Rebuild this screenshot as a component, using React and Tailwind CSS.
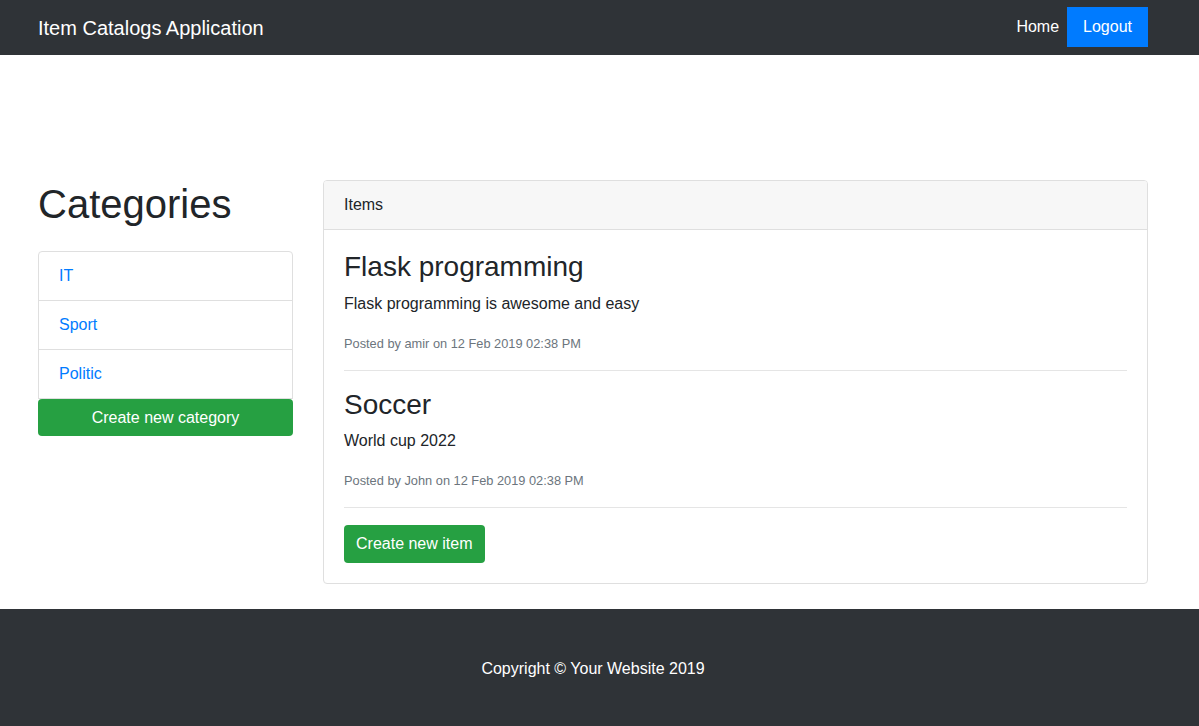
export default function App() {
  const font = { fontFamily: '"Liberation Sans", Arial, sans-serif' };
  const items = [
    { title: "Flask programming", desc: "Flask programming is awesome and easy", by: "amir" },
    { title: "Soccer", desc: "World cup 2022", by: "John" },
  ];
  return (
    <div className="min-h-[726px] flex flex-col bg-white text-[#212529] text-[16px] leading-[24px]" style={font}>
      <nav className="h-[55px] bg-[#2f3337] flex items-center">
        <div className="ml-[38px] w-[1110px] flex items-center justify-between">
          <a className="text-white text-[20px] leading-[30px]">Item Catalogs Application</a>
          <div className="flex items-center -mt-px">
            <a className="text-white px-2 py-2 leading-[24px]">Home</a>
            <a className="text-white bg-[#007bff] px-4 py-2 leading-[24px]">Logout</a>
          </div>
        </div>
      </nav>

      <main className="flex-1 pt-[125px] pb-[25px]">
        <div className="ml-[38px] w-[1110px] flex items-start gap-[30px]">
          <div className="w-[255px] shrink-0">
            <h1 className="text-[40px] leading-[48px] font-medium mb-[23px]">Categories</h1>
            <div className="flex flex-col">
              {["IT", "Sport", "Politic"].map((c, i) => (
                <a
                  key={c}
                  className={`block border border-[#dfdfdf] px-5 py-3 text-[#007bff] ${i === 0 ? "rounded-t-[4px]" : "-mt-px"}`}
                >
                  {c}
                </a>
              ))}
              <button className="h-[37px] w-full rounded-[4px] bg-[#26a042] text-white text-[16px]">
                Create new category
              </button>
            </div>
          </div>

          <div className="flex-1 border border-[#dfdfdf] rounded-[4px] overflow-hidden">
            <div className="bg-[#f7f7f7] border-b border-[#dfdfdf] px-5 py-3">Items</div>
            <div className="px-5 pt-5 pb-5">
              {items.map((it) => (
                <div key={it.title}>
                  <h3 className="text-[28px] leading-[33.6px] font-medium mb-2">{it.title}</h3>
                  <p className="mb-4">{it.desc}</p>
                  <p className="mb-[14px] text-[12.8px] leading-[24px] text-[#6c757d]">
                    Posted by {it.by} on 12 Feb 2019 02:38 PM
                  </p>
                  <hr className="border-0 border-t border-[#e5e5e5] mb-[17px]" />
                </div>
              ))}
              <button className="h-[38px] px-3 rounded-[4px] bg-[#26a042] text-white text-[16px]">
                Create new item
              </button>
            </div>
          </div>
        </div>
      </main>

      <footer className="bg-[#2f3337] pt-12 pb-[46px]">
        <div className="ml-[38px] w-[1110px] text-center text-white">Copyright © Your Website 2019</div>
      </footer>
    </div>
  );
}
